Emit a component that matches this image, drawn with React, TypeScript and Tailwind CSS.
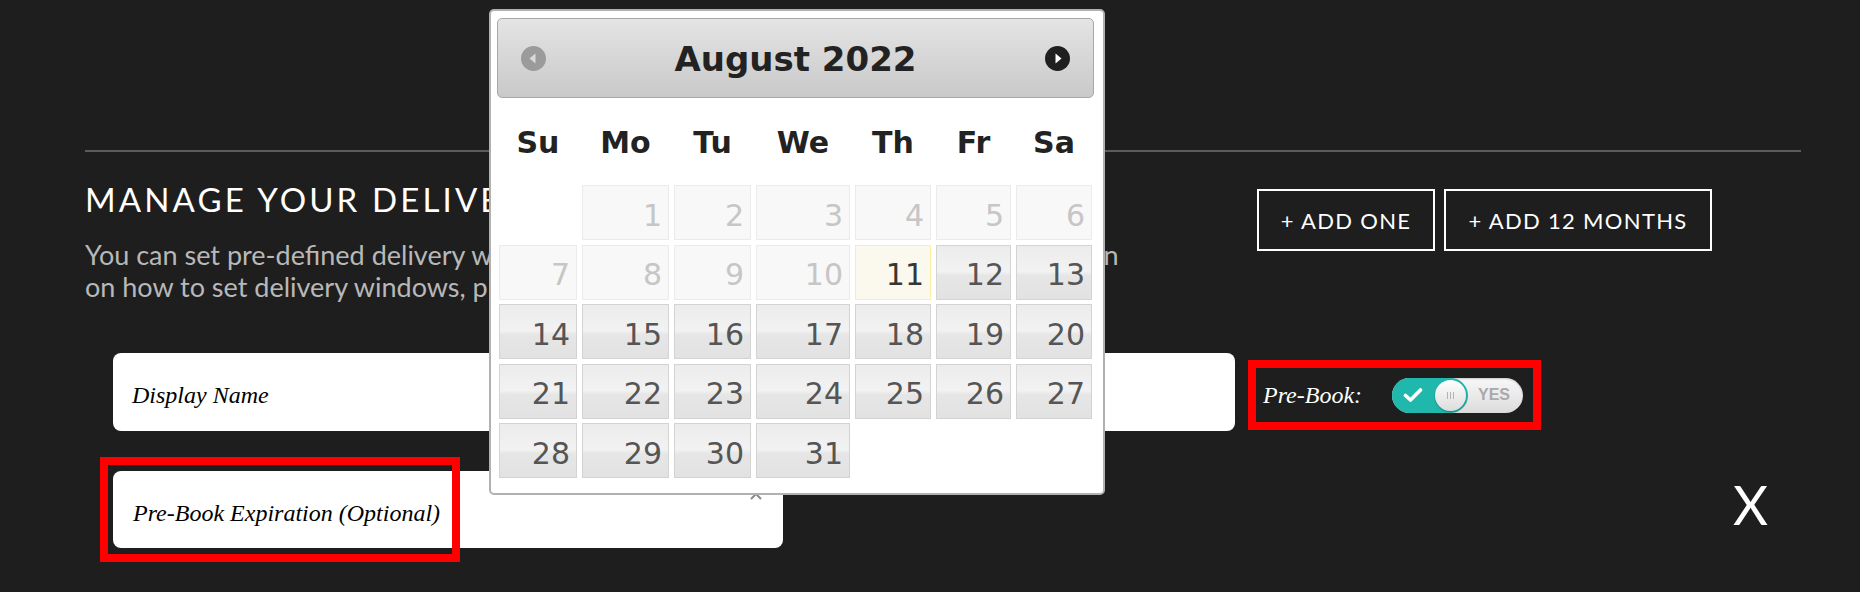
const cols = "grid grid-cols-[78px_87px_77px_94px_76px_75px_76px] gap-x-[5px]";

function DayCell({ day }: { day: number }) {
  if (day === 0) return <div />;
  let look =
    "border-[#d3d3d3] bg-[linear-gradient(to_bottom,#ececec_0%,#f2f2f2_48%,#e6e6e6_56%,#e2e2e2_100%)] text-[#555555]";
  if (day < 11) look = "border-[#ebebeb] bg-[#f8f8f8] text-[#c6c6c6]";
  if (day === 11) look = "border-[#fcefa1] bg-[#fbf9ee] text-[#363636]";
  return (
    <div className={`flex items-center justify-end border pr-[6px] pt-[5px] text-[30px] leading-[35px] ${look}`}>
      {day}
    </div>
  );
}

function Calendar() {
  const days = [0, ...Array.from({ length: 31 }, (_, i) => i + 1)];
  return (
    <div className="absolute left-[489px] top-[9px] z-10 h-[486px] w-[616px] rounded-[5px] border-2 border-[#b1b1b1] bg-white font-['DejaVu_Sans',sans-serif]">
      <div className="ml-[6px] mt-[7px] grid h-[80px] w-[597px] grid-cols-[1fr_auto_1fr] items-center rounded-[5px] border border-[#a8a8a8] bg-[linear-gradient(to_bottom,#e4e4e4,#c9c9c9)] px-[23px]">
        <svg width="25" height="25" viewBox="0 0 25 25" className="justify-self-start">
          <circle cx="12.5" cy="12.5" r="12.5" fill="#9b9b9b" />
          <polygon points="14.5,7.5 14.5,17.5 8.5,12.5" fill="#dadada" />
        </svg>
        <div className="pt-[2px] text-[34px] font-bold text-[#222222]">August 2022</div>
        <svg width="25" height="25" viewBox="0 0 25 25" className="justify-self-end">
          <circle cx="12.5" cy="12.5" r="12.5" fill="#1f1f1f" />
          <polygon points="10.5,7.5 10.5,17.5 16.5,12.5" fill="#ffffff" />
        </svg>
      </div>
      <div className={`ml-[8px] mt-[27px] ${cols} text-center text-[30px] font-bold leading-[35px] text-[#222222]`}>
        <div>Su</div>
        <div>Mo</div>
        <div>Tu</div>
        <div>We</div>
        <div>Th</div>
        <div>Fr</div>
        <div>Sa</div>
      </div>
      <div className={`ml-[8px] mt-[25px] ${cols} auto-rows-[55px] gap-y-[4.5px]`}>
        {days.map((d, i) => (
          <DayCell key={i} day={d} />
        ))}
      </div>
    </div>
  );
}

function Toggle() {
  return (
    <div className="flex h-[35px] w-[131px] items-center rounded-full bg-[linear-gradient(to_bottom,#f8f8f8,#dcdcdc)] shadow-[inset_0_1px_2px_rgba(0,0,0,0.2)]">
      <div className="flex h-[35px] w-[76px] items-center justify-between rounded-full bg-[#20b8ad] pl-[11px] pr-[2px]">
        <svg width="20" height="16" viewBox="0 0 20 16">
          <path d="M2.5 8.5 L7.5 13 L17.5 3" fill="none" stroke="#ffffff" strokeWidth="3.6" strokeLinecap="round" strokeLinejoin="round" />
        </svg>
        <div className="flex h-[31px] w-[31px] items-center justify-center gap-[2px] rounded-full bg-[linear-gradient(to_bottom,#ffffff,#dcdcdc)] shadow-[0_1px_2px_rgba(0,0,0,0.3)]">
          <span className="h-[7px] w-px bg-[#b3b3b3]" />
          <span className="h-[7px] w-px bg-[#b3b3b3]" />
          <span className="h-[7px] w-px bg-[#b3b3b3]" />
        </div>
      </div>
      <span className="ml-[10px] font-['Liberation_Sans',sans-serif] text-[16px] font-bold not-italic text-[#a9a9a9]">
        YES
      </span>
    </div>
  );
}

export default function App() {
  return (
    <div className="relative h-[592px] w-full overflow-hidden bg-[#1e1e1e] font-['Lato',sans-serif]">
      <div className="pl-[85px] pr-[59px] pt-[150px]">
        <div className="h-[2px] bg-[#5c5c5c]" />

        <div className="mt-[27px] flex items-start">
          <div className="flex-1">
            <h2 className="whitespace-nowrap text-[33px] leading-[40px] tracking-[0.095em] text-white">
              MANAGE YOUR DELIVERY WINDOWS
            </h2>
            <p className="mt-[20px] whitespace-nowrap text-[27px] leading-[32px] text-[#b8b8b8]">
              You can set pre-defined delivery windows for buyers to pick from. For more information
              <br />
              on how to set delivery windows, please visit our help center.
            </p>
          </div>
          <div className="mr-[89px] mt-[10px] flex gap-[9px] text-[22px] tracking-[0.06em] text-white">
            <button className="flex h-[62px] w-[178px] items-center justify-center border-2 border-white">
              + ADD ONE
            </button>
            <button className="flex h-[62px] w-[268px] items-center justify-center border-2 border-white">
              + ADD 12 MONTHS
            </button>
          </div>
        </div>

        <div className="mt-[50px] flex items-start gap-[13px] pl-[28px] font-['Liberation_Serif',serif] text-[24px] italic">
          <div className="flex h-[78px] w-[1122px] items-center rounded-[8px] bg-white pl-[19px] pt-[6px] text-black">
            Display Name
          </div>
          <div className="mt-[7px] flex h-[70px] w-[293px] items-center border-[8px] border-[#ff0000] pl-[7px] text-white">
            <span className="w-[129px]">Pre-Book:</span>
            <Toggle />
          </div>
        </div>

        <div className="mt-[40px] flex items-start justify-between pl-[28px] pr-[33px]">
          <div className="relative flex h-[77px] w-[670px] items-center rounded-[8px] bg-white pl-[20px] pt-[6px] font-['Liberation_Serif',serif] text-[24px] italic text-black">
            Pre-Book Expiration (Optional)
            <svg width="14" height="14" viewBox="0 0 14 14" className="absolute left-[636px] top-[16px]">
              <path d="M2 2 L12 12 M12 2 L2 12" stroke="#8a8a8a" strokeWidth="2" />
            </svg>
            <div className="pointer-events-none absolute -left-[13px] -top-[14px] h-[105px] w-[360px] border-[8px] border-[#ff0000]" />
          </div>
          <div className="mt-[2px] text-[54px] leading-[64px] text-white">X</div>
        </div>
      </div>

      <Calendar />
    </div>
  );
}
